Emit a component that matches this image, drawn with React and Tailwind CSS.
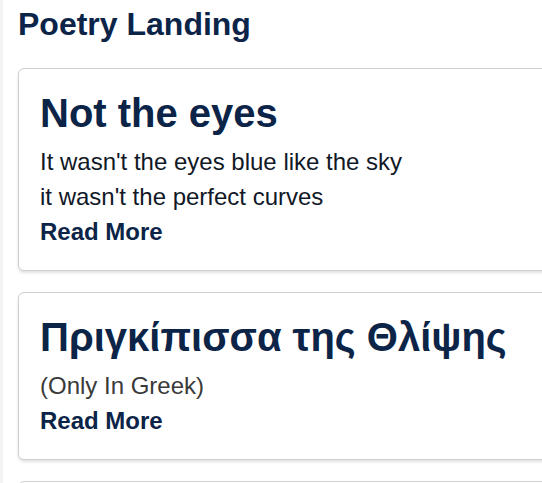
import React from 'react';

const poems = [
  {
    title: 'Not the eyes',
    lines: ["It wasn't the eyes blue like the sky", "it wasn't the perfect curves"],
    muted: false,
  },
  {
    title: 'Πριγκίπισσα της Θλίψης',
    lines: ['(Only In Greek)'],
    muted: true,
  },
];

const PoemCard = ({ poem }) => (
  <div className="w-[560px] shrink-0 bg-white border border-[#d0d0d0] rounded-md shadow-[0_2px_3px_rgba(0,0,0,0.12)] pl-[21px] pt-[20px] pb-[21px]">
    <h2 className="text-[40px] font-bold leading-[48px] mb-[7px] text-[#0b2447]">{poem.title}</h2>
    {poem.lines.map((line, i) => (
      <p
        key={i}
        className={`text-[24px] leading-[35px] ${poem.muted ? 'text-[#3a3a3a]' : 'text-[#111827]'}`}
      >
        {line}
      </p>
    ))}
    <a className="block text-[24px] leading-[35px] font-bold text-[#0b2447]">Read More</a>
  </div>
);

export default function App() {
  return (
    <div className="w-[542px] h-[483px] overflow-hidden bg-white border-l-[3px] border-[#f3f3f3] font-['Liberation_Sans',Arial,sans-serif]">
      <div className="pl-[15px] pt-[4px]">
        <h1 className="text-[32px] font-bold leading-[40px] text-[#0b2447]">Poetry Landing</h1>
        <div className="flex flex-col gap-[21px] mt-[24px]">
          {poems.map((p, i) => (
            <PoemCard key={i} poem={p} />
          ))}
          {/* next card, only its top edge is in view */}
          <div className="w-[560px] h-[160px] shrink-0 bg-white border border-[#d0d0d0] rounded-md" />
        </div>
      </div>
    </div>
  );
}
